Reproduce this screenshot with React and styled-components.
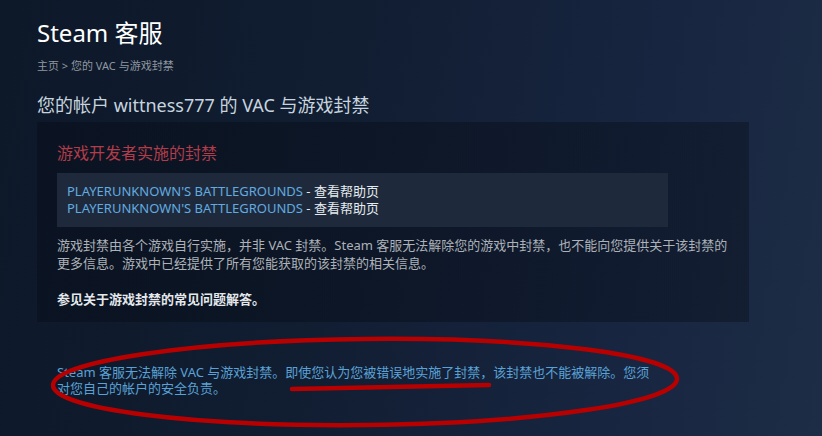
import styled, { createGlobalStyle } from 'styled-components';

const GlobalStyle = createGlobalStyle`
  html, body {
    margin: 0;
    padding: 0;
    background: #111c2e;
  }
  body {
    font-family: 'Noto Sans', 'Noto Sans CJK SC', sans-serif;
  }
`;

const Page = styled.div`
  position: relative;
  width: 822px;
  height: 436px;
  overflow: hidden;
  box-sizing: border-box;
  padding: 18px 0 0 37px;
  background: linear-gradient(100deg, #0d1829 0%, #111d31 40%, #172540 75%, #1e2d46 100%);
`;

const Title = styled.h1`
  margin: 0;
  font-size: 24px;
  line-height: 30px;
  font-weight: 400;
  color: #ffffff;
`;

const Breadcrumb = styled.div`
  margin-top: 11px;
  font-size: 11px;
  line-height: 14px;
  color: #8f98a0;
`;

const Heading = styled.h2`
  margin: 20px 0 0;
  font-size: 18px;
  line-height: 24px;
  font-weight: 400;
  color: #c6d4df;
`;

const Panel = styled.div`
  width: 712px;
  box-sizing: border-box;
  margin-top: 5px;
  padding: 21px 20px 14px;
  background: linear-gradient(90deg, rgba(8, 14, 26, 0.55) 0%, rgba(10, 16, 28, 0.45) 100%);
`;

const BanTitle = styled.div`
  font-size: 16px;
  line-height: 20px;
  color: #b23c49;
`;

const LinkBox = styled.div`
  width: 611px;
  box-sizing: border-box;
  margin-top: 10px;
  padding: 10px 10px;
  background: #1e2a3b;
  font-size: 13px;
  line-height: 17px;
`;

const GameLine = styled.div`
  color: #e6ebef;
`;

const GameLink = styled.span`
  color: #62abe0;
`;

const Paragraph = styled.p`
  margin: 9px 0 0;
  font-size: 13px;
  line-height: 18px;
  color: #acb2b8;
`;

const FaqLine = styled.p`
  margin: 18px 0 0;
  font-size: 13px;
  line-height: 18px;
  font-weight: 700;
  color: #e4e8eb;
`;

const Notice = styled.p`
  margin: 42px 0 0;
  padding: 0 20px;
  font-size: 13px;
  line-height: 16px;
  color: #5aa2d6;
`;

const Markup = styled.svg`
  position: absolute;
  left: 0;
  top: 0;
  width: 822px;
  height: 436px;
  pointer-events: none;
`;

export default function App() {
  return (
    <>
      <GlobalStyle />
      <Page>
        <Title>Steam 客服</Title>
        <Breadcrumb>主页 &gt; 您的 VAC 与游戏封禁</Breadcrumb>
        <Heading>您的帐户 wittness777 的 VAC 与游戏封禁</Heading>
        <Panel>
          <BanTitle>游戏开发者实施的封禁</BanTitle>
          <LinkBox>
            <GameLine><GameLink>PLAYERUNKNOWN'S BATTLEGROUNDS</GameLink> - 查看帮助页</GameLine>
            <GameLine><GameLink>PLAYERUNKNOWN'S BATTLEGROUNDS</GameLink> - 查看帮助页</GameLine>
          </LinkBox>
          <Paragraph>
            游戏封禁由各个游戏自行实施，并非 VAC 封禁。Steam 客服无法解除您的游戏中封禁，也不能向您提供关于该封禁的<br />
            更多信息。游戏中已经提供了所有您能获取的该封禁的相关信息。
          </Paragraph>
          <FaqLine>参见关于游戏封禁的常见问题解答。</FaqLine>
        </Panel>
        <Notice>
          Steam 客服无法解除 VAC 与游戏封禁。即使您认为您被错误地实施了封禁，该封禁也不能被解除。您须<br />
          对您自己的帐户的安全负责。
        </Notice>
        <Markup viewBox="0 0 822 436">
          <ellipse cx="365" cy="382" rx="312" ry="43" transform="rotate(-0.6 365 382)" fill="none" stroke="#b80000" strokeWidth="4.5" />
          <path d="M292 389 L489 385" stroke="#b80000" strokeWidth="4.5" strokeLinecap="round" fill="none" />
        </Markup>
      </Page>
    </>
  );
}
